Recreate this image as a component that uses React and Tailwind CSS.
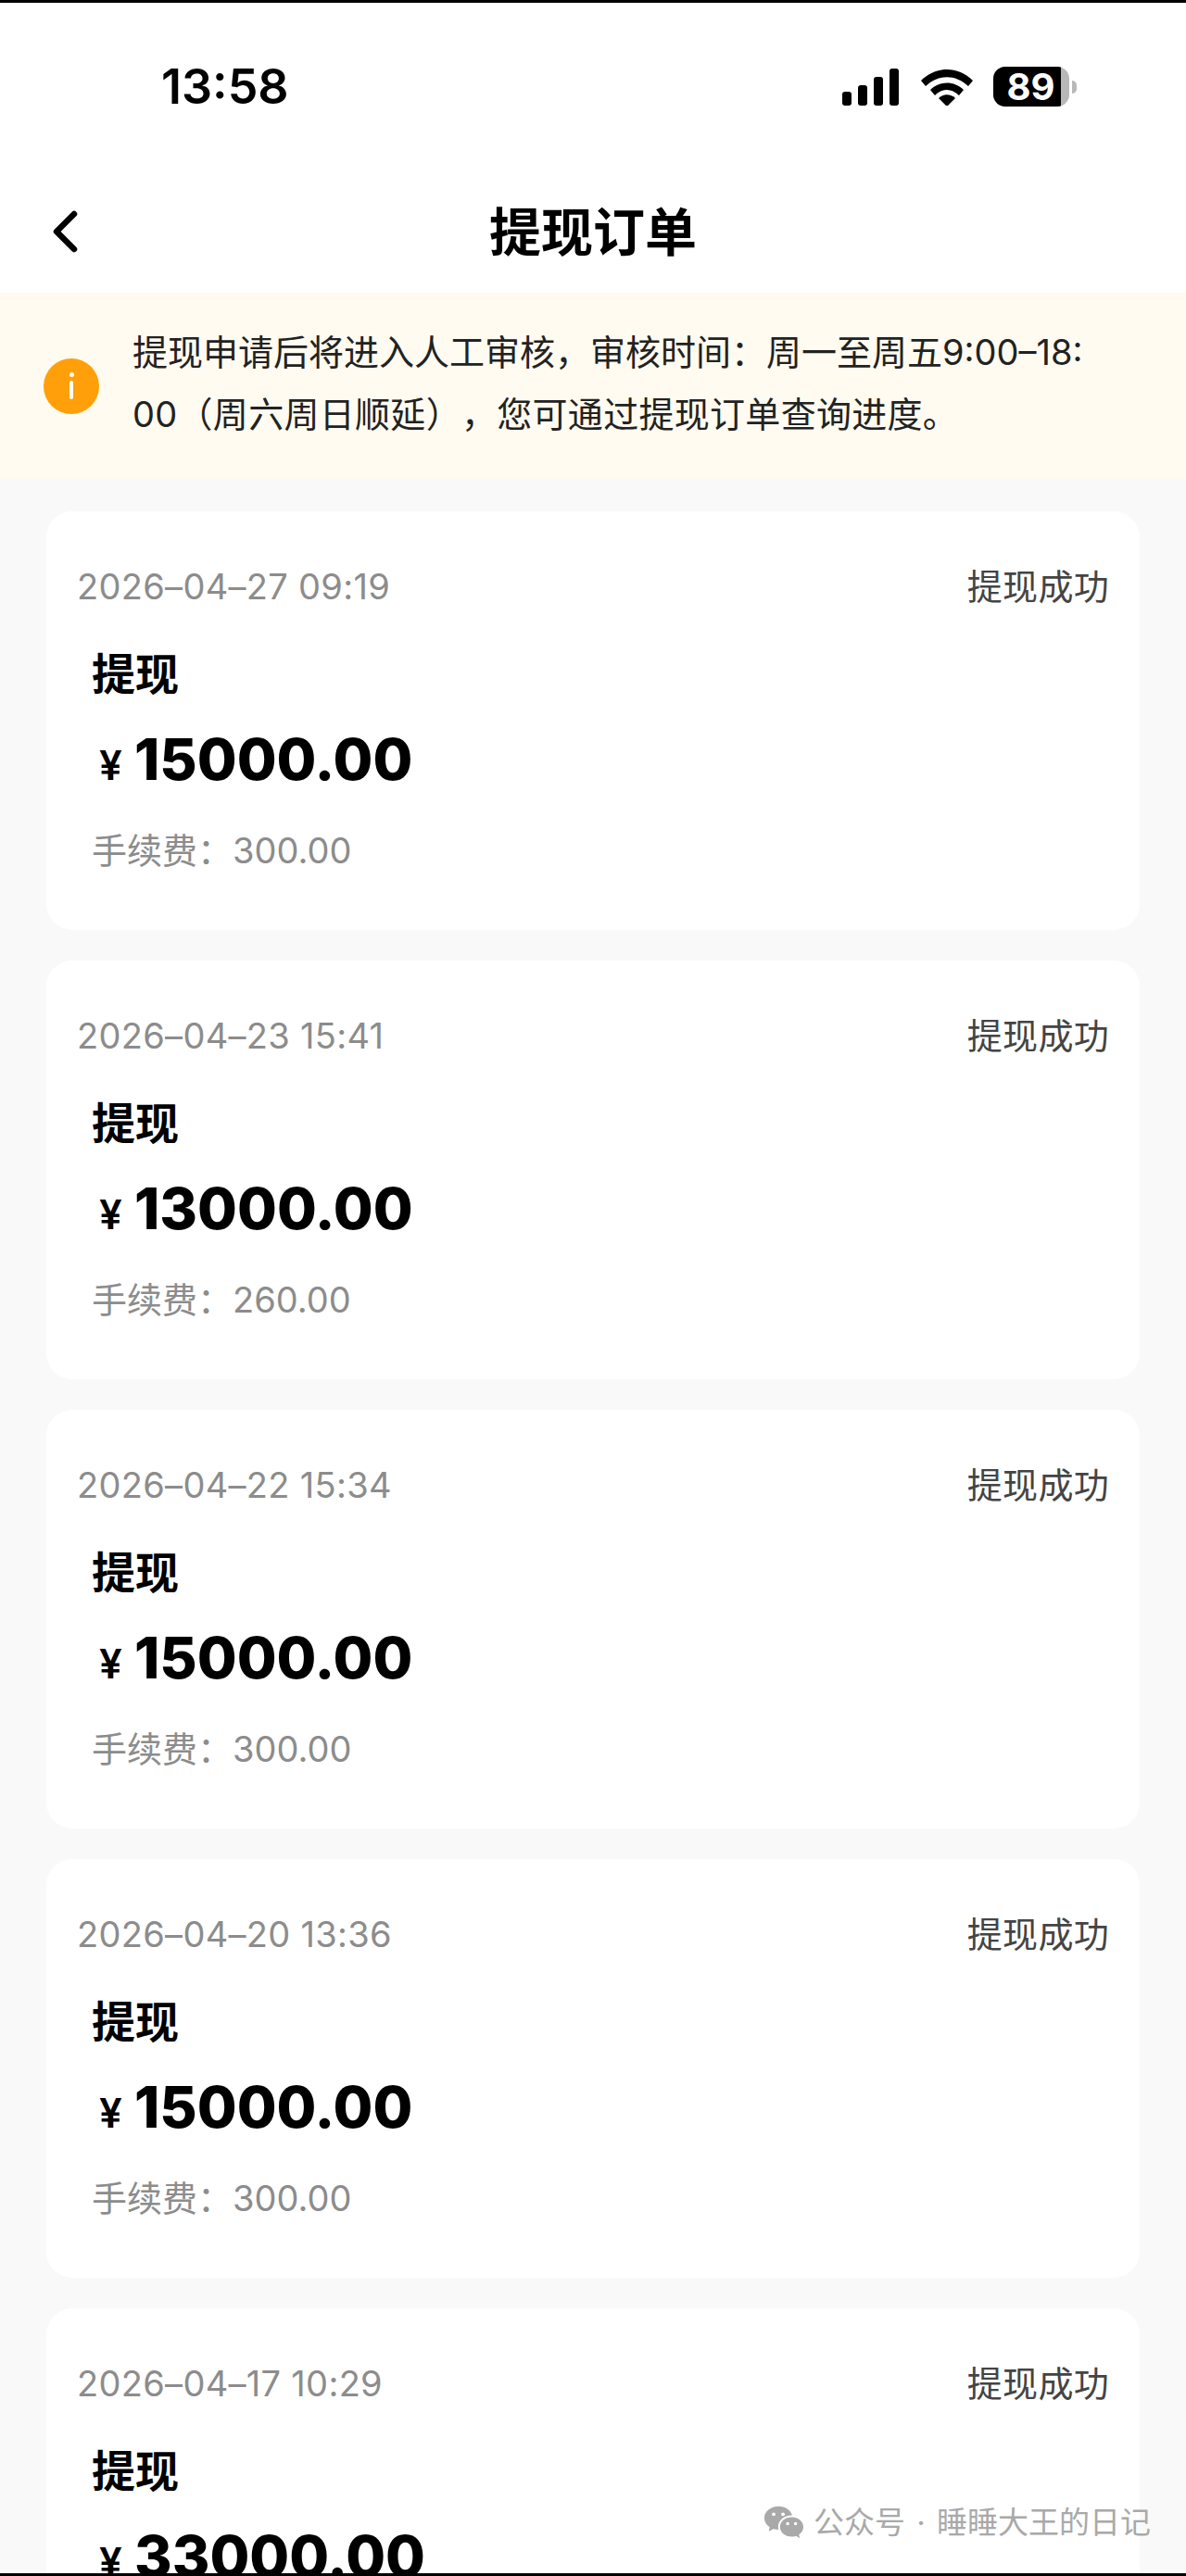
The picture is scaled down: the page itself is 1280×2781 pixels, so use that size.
import React from "react";
import { RiWechatFill } from "react-icons/ri";

const orders = [
  { date: "2026–04–27 09:19", amount: "15000.00", fee: "300.00" },
  { date: "2026–04–23 15:41", amount: "13000.00", fee: "260.00" },
  { date: "2026–04–22 15:34", amount: "15000.00", fee: "300.00" },
  { date: "2026–04–20 13:36", amount: "15000.00", fee: "300.00" },
  { date: "2026–04–17 10:29", amount: "33000.00" },
];

function StatusIcons() {
  return (
    <div className="flex items-center">
      <div className="flex items-end gap-[7px] h-[40px]">
        <div className="w-[10px] h-[15px] rounded-[3px] bg-black" />
        <div className="w-[10px] h-[22px] rounded-[3px] bg-black" />
        <div className="w-[10px] h-[31px] rounded-[3px] bg-black" />
        <div className="w-[10px] h-[40px] rounded-[3px] bg-black" />
      </div>
      <svg className="ml-[24px]" width="56" height="40" viewBox="0 0 56 40">
        <path d="M0 13 C16 -3 40 -3 56 13 L51 19 C37 6 19 6 5 19 Z" fill="#000" />
        <path d="M10 23 C20 13 36 13 46 23 L41 29 C33 21 23 21 15 29 Z" fill="#000" />
        <path d="M19 32 C24 27 32 27 37 32 L28 41 Z" fill="#000" />
      </svg>
      <div className="ml-[22px] flex items-center">
        <div className="flex w-[82px] h-[43px] rounded-[13px] overflow-hidden bg-[#b8b8b8]">
          <div className="w-[73px] h-[43px] bg-black flex items-center justify-center pl-[8px] text-white text-[40px] leading-[43px] font-bold">
            89
          </div>
        </div>
        <div className="ml-[3px] w-[5px] h-[14px] rounded-r-full bg-[#b8b8b8]" />
      </div>
    </div>
  );
}

function OrderCard({ date, amount, fee }) {
  return (
    <div className="h-[452px] mb-[33px] rounded-[28px] bg-white pl-[33px] pr-[33px] pt-[51px]">
      <div className="flex justify-between items-center h-[60px]">
        <span className="text-[38px] leading-[60px] tracking-[0.3px] text-[#8c8c8c]">{date}</span>
        <span className="text-[38px] leading-[60px] tracking-[0.3px] text-[#444444]">提现成功</span>
      </div>
      <div className="pl-[16px]">
        <div className="mt-[35px] h-[60px] text-[47px] leading-[60px] font-bold text-black">提现</div>
        <div className="mt-[22px] h-[80px] flex items-baseline">
          <span className="ml-[8px] w-[38px] text-[44px] leading-[80px] font-semibold text-black">¥</span>
          <span className="text-[62px] leading-[80px] font-extrabold text-black">{amount}</span>
        </div>
        {fee && (
          <div className="mt-[33px] h-[50px] text-[38px] leading-[50px] text-[#8c8c8c] [text-spacing-trim:space-all]">
            手续费：{fee}
          </div>
        )}
      </div>
    </div>
  );
}

export default function App() {
  return (
    <div className="relative h-[2781px] w-full overflow-hidden bg-[#f9f9f9] font-['Inter','Noto_Sans_CJK_SC',sans-serif]">
      <div className="h-[3px] bg-black" />
      <div className="h-[313px] bg-white pt-[69px]">
        <div className="flex justify-between items-center h-[43px] pl-[174px] pr-[118px]">
          <span className="text-[52px] leading-[43px] font-semibold text-black">13:58</span>
          <StatusIcons />
        </div>
        <div className="relative flex items-center justify-center h-[100px] mt-[86px]">
          <svg className="absolute left-[54px] top-[24px]" width="32" height="50" viewBox="0 0 32 50" fill="none">
            <path d="M26 6 L7 25 L26 44" stroke="#000" strokeWidth="6.5" strokeLinecap="round" strokeLinejoin="round" />
          </svg>
          <span className="text-[56px] leading-[100px] font-bold text-black">提现订单</span>
        </div>
      </div>
      <div className="h-[201px] bg-[#fffbf0] flex items-center pl-[47px]">
        <div className="w-[60px] h-[60px] rounded-full bg-[#ff9f0a] flex flex-col items-center justify-center gap-[4px] shrink-0">
          <div className="w-[5px] h-[5px] rounded-full bg-white" />
          <div className="w-[4px] h-[20px] rounded-full bg-white" />
        </div>
        <div className="ml-[36px] pb-[5px] text-[38px] leading-[67px] text-[#222222] [text-spacing-trim:space-all]">
          提现申请后将进入人工审核，审核时间：周一至周五9:00–18:
          <br />
          <span className="tracking-[0.3px]">00（周六周日顺延），您可通过提现订单查询进度。</span>
        </div>
      </div>
      <div className="px-[50px] pt-[35px]">
        {orders.map((o) => (
          <OrderCard key={o.date} {...o} />
        ))}
      </div>
      <div className="absolute left-[823px] top-[2700px] flex items-center text-[#a9a9a9]">
        <RiWechatFill className="w-[46px] h-[46px]" />
        <span className="ml-[9px] text-[33px] leading-[46px] [word-spacing:3px]">公众号 · 睡睡大王的日记</span>
      </div>
      <div className="absolute left-0 right-0 bottom-0 h-[3px] bg-black" />
    </div>
  );
}
